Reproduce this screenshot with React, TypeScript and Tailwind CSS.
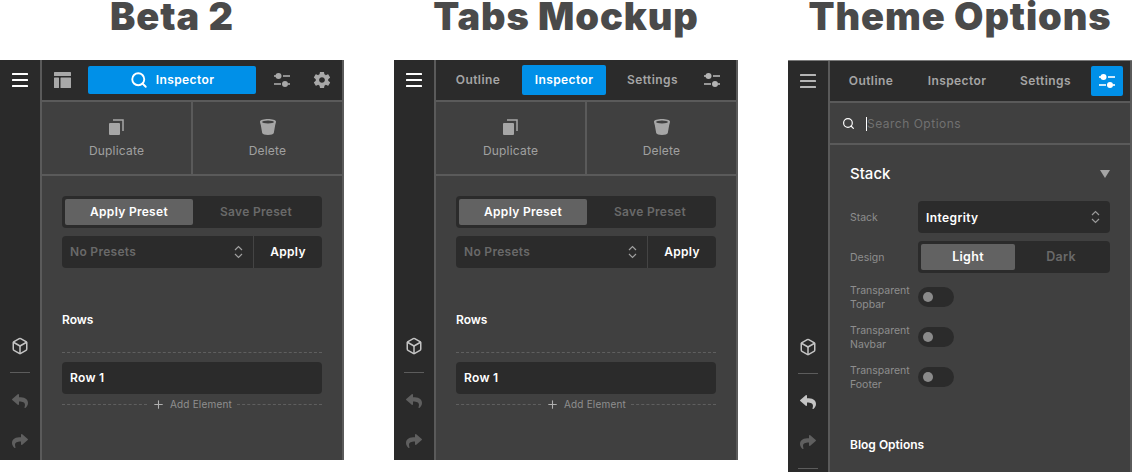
import React from 'react';
import { Box, Plus, Search } from 'lucide-react';
import { FaReply, FaShare } from 'react-icons/fa';
import { IoMdSettings } from 'react-icons/io';

const Hamburger = ({ dim }: { dim?: boolean }) => (
  <svg width="16" height="14" viewBox="0 0 16 14" className={dim ? 'text-[#b5b5b5]' : 'text-white'}>
    <rect y="0" width="16" height="2" rx="0.5" fill="currentColor" />
    <rect y="6" width="16" height="2" rx="0.5" fill="currentColor" />
    <rect y="12" width="16" height="2" rx="0.5" fill="currentColor" />
  </svg>
);

const Sliders = ({ className }: { className: string }) => (
  <svg width="16" height="14" viewBox="0 0 16 14" className={className}>
    <rect x="0" y="2.200" width="2" height="1.600" fill="currentColor" />
    <circle cx="4.500" cy="3" r="3" fill="currentColor" />
    <rect x="9" y="2.200" width="7" height="1.600" fill="currentColor" />
    <rect x="0" y="10.200" width="7" height="1.600" fill="currentColor" />
    <circle cx="11" cy="11" r="3" fill="currentColor" />
    <rect x="14" y="10.200" width="2" height="1.600" fill="currentColor" />
  </svg>
);

const LayoutIcon = () => (
  <svg width="17" height="16" viewBox="0 0 17 16" className="text-[#a8a8a8]">
    <rect x="0" y="0" width="17" height="4" rx="0.5" fill="currentColor" />
    <rect x="0" y="5.500" width="5" height="10.500" rx="0.5" fill="currentColor" />
    <rect x="6.500" y="5.500" width="10.500" height="10.500" rx="0.5" fill="currentColor" />
  </svg>
);

const DuplicateIcon = () => (
  <svg width="15" height="16" viewBox="0 0 15 16" className="text-[#a6a6a6]">
    <rect x="0" y="4" width="11" height="12" rx="1" fill="currentColor" />
    <path d="M4 1h10v11" fill="none" stroke="currentColor" strokeWidth="1.500" />
  </svg>
);

const TrashIcon = () => (
  <svg width="16" height="16" viewBox="0 0 16 16" className="text-[#a6a6a6]">
    <path d="M0 2.500C0 1 4 0 8 0s8 1 8 2.500c0 1-.4 2-.8 3.500L13.800 14c-.2 1.300-2.800 2-5.800 2s-5.600-.7-5.800-2L.8 6C.4 4.500 0 3.500 0 2.500z" fill="currentColor" />
    <ellipse cx="8" cy="3" rx="6" ry="1.500" fill="#404040" />
  </svg>
);

const UpDown = ({ className }: { className: string }) => (
  <svg width="9" height="14" viewBox="0 0 9 14" fill="none" stroke="currentColor" strokeWidth="1.200" className={className}>
    <path d="M1 5l3.500-3.500L8 5" />
    <path d="M1 9l3.500 3.500L8 9" />
  </svg>
);

const Divider = () => <div className="w-5 h-px bg-[#5c5c5c]" />;

const Rail = ({ dimMenu, undoOn, extra }: { dimMenu?: boolean; undoOn?: boolean; extra?: boolean }) => (
  <div className="w-10 shrink-0 bg-[#2a2a2a] flex flex-col items-center">
    <div className="h-10 shrink-0 flex items-center justify-center">
      <Hamburger dim={dimMenu} />
    </div>
    <div className="mt-[237px] flex flex-col items-center">
      <Box size={18} strokeWidth={2} className="text-[#c4c4c4]" />
      <div className="mt-[17px]"><Divider /></div>
      <FaReply size={16} className={`mt-[20px] ${undoOn ? 'text-[#c4c4c4]' : 'text-[#5f5f5f]'}`} />
      <FaShare size={16} className="mt-6 text-[#5f5f5f]" />
      {extra && <div className="mt-[18px]"><Divider /></div>}
    </div>
  </div>
);

const Tab = ({ label, className }: { label: string; className: string }) => (
  <div className={`h-[30px] flex items-center justify-center text-xs tracking-[0.4px] font-semibold text-[#a5a5a5] ${className}`}>
    {label}
  </div>
);

const ActiveTab = ({ label, className }: { label: string; className: string }) => (
  <div className={`w-[84px] h-[30px] flex items-center justify-center rounded-[2px] bg-[#0090e8] text-white text-xs tracking-[0.4px] font-semibold ${className}`}>
    {label}
  </div>
);

const Toggle = ({ left, right, activeWidth, className }: { left: string; right: string; activeWidth: string; className: string }) => (
  <div className={`h-8 p-[3px] flex rounded-[4px] bg-[#2b2b2b] font-semibold tracking-[0.3px] ${className}`}>
    <div className={`${activeWidth} flex items-center justify-center rounded-[2px] bg-[#626262] text-white`}>{left}</div>
    <div className="flex-1 flex items-center justify-center text-[#696969]">{right}</div>
  </div>
);

const Actions = () => (
  <div className="h-[74px] shrink-0 flex border-b-2 border-[#5a5a5a]">
    <div className="flex-1 flex flex-col items-center pt-[17px] border-r-2 border-[#5a5a5a]">
      <DuplicateIcon />
      <span className="mt-[8px] text-xs tracking-[0.2px] text-[#a0a0a0]">Duplicate</span>
    </div>
    <div className="flex-1 flex flex-col items-center pt-[17px]">
      <TrashIcon />
      <span className="mt-[8px] text-xs tracking-[0.2px] text-[#a0a0a0]">Delete</span>
    </div>
  </div>
);

const DashedLine = () => <div className="flex-1 border-t border-dashed border-[#5f5f5f]" />;

const PresetBody = () => (
  <div className="px-5 pt-5">
    <Toggle left="Apply Preset" right="Save Preset" activeWidth="w-32" className="text-xs" />
    <div className="mt-2 h-8 flex rounded-[4px] bg-[#2b2b2b] text-xs font-semibold tracking-[0.3px]">
      <div className="flex-1 flex items-center justify-between pl-2 pr-[10px] text-[#696969] border-r border-[#444444]">
        <span>No Presets</span>
        <UpDown className="text-[#a0a0a0]" />
      </div>
      <div className="w-[68px] flex items-center justify-center text-white">Apply</div>
    </div>
    <div className="mt-[44px] text-xs font-semibold text-white">Rows</div>
    <div className="mt-[24px] border-t border-dashed border-[#5f5f5f]" />
    <div className="mt-[9px] h-8 flex items-center px-2 rounded-[4px] bg-[#2b2b2b] text-xs font-semibold tracking-[0.3px] text-white">Row 1</div>
    <div className="h-5 flex items-center gap-[5px]">
      <DashedLine />
      <Plus size={13} className="text-[#b0b0b0]" />
      <span className="text-[10px] tracking-[0.2px] text-[#8f8f8f]">Add Element</span>
      <DashedLine />
    </div>
  </div>
);

const Title = ({ children }: { children: React.ReactNode }) => (
  <h1 className="h-[60px] text-center whitespace-nowrap text-[38px] leading-[32px] font-black tracking-[0.9px] text-[#4a4a4a]">{children}</h1>
);

const OptionRow = ({ label, children }: { label: React.ReactNode; children: React.ReactNode }) => (
  <div className="flex items-center">
    <div className="w-[68px] translate-y-px text-[10.500px] leading-[14px] text-[#8e8e8e]">{label}</div>
    {children}
  </div>
);

const Switch = () => (
  <div className="w-9 h-5 rounded-full bg-[#2b2b2b] flex items-center pl-[5px]">
    <div className="w-2.5 h-2.5 rounded-full bg-[#8a8a8a]" />
  </div>
);

const BetaPanel = () => (
  <div className="h-[400px] flex bg-[#2a2a2a]">
    <Rail />
    <div className="flex-1 min-w-0 flex flex-col bg-[#404040] border-x-2 border-[#5a5a5a]">
      <div className="h-[42px] shrink-0 bg-[#2b2b2b] border-b-2 border-[#5a5a5a] flex items-center pl-3">
        <LayoutIcon />
        <div className="ml-[17px] w-[168px] h-7 flex items-center justify-center gap-2 rounded-[2px] bg-[#0090e8] text-white text-xs font-semibold tracking-[0.4px]">
          <Search size={18} strokeWidth={2.500} />
          Inspector
        </div>
        <Sliders className="ml-[18px] text-[#a8a8a8]" />
        <IoMdSettings size={20} className="ml-[22px] text-[#a8a8a8]" />
      </div>
      <Actions />
      <PresetBody />
    </div>
  </div>
);

const TabsPanel = () => (
  <div className="h-[400px] flex bg-[#2a2a2a]">
    <Rail />
    <div className="flex-1 min-w-0 flex flex-col bg-[#404040] border-x-2 border-[#5a5a5a]">
      <div className="h-[42px] shrink-0 bg-[#2b2b2b] border-b-2 border-[#5a5a5a] flex items-center pl-5">
        <Tab label="Outline" className="w-[44px]" />
        <ActiveTab label="Inspector" className="ml-[22px]" />
        <Tab label="Settings" className="ml-[21px] w-[51px]" />
        <Sliders className="ml-[26px] text-[#b4b4b4]" />
      </div>
      <Actions />
      <PresetBody />
    </div>
  </div>
);

const ThemePanel = () => (
  <div className="h-[412px] overflow-hidden flex bg-[#2a2a2a] border-t border-[#7a7a7a]">
    <Rail dimMenu undoOn extra />
    <div className="flex-1 min-w-0 flex flex-col bg-[#404040] border-x-2 border-[#5a5a5a]">
      <div className="h-[42px] shrink-0 bg-[#2b2b2b] border-b-2 border-[#5a5a5a] flex items-center pl-[19px]">
        <Tab label="Outline" className="w-[44px]" />
        <Tab label="Inspector" className="ml-[35px] w-[58px]" />
        <Tab label="Settings" className="ml-[34px] w-[51px]" />
        <div className="ml-[20px] w-8 h-[30px] rounded-[2px] bg-[#0090e8] flex items-center justify-center">
          <Sliders className="text-white" />
        </div>
      </div>
      <div className="h-[42px] shrink-0 pt-px border-b-2 border-[#5a5a5a] flex items-center pl-3">
        <Search size={13} strokeWidth={2.200} className="text-white" />
        <div className="ml-[11px] w-px h-[14px] bg-white" />
        <span className="text-xs tracking-[0.5px] text-[#717171]">Search Options</span>
      </div>
      <div className="px-5">
        <div className="mt-[18px] h-[22px] flex items-center justify-between">
          <span className="text-[15px] leading-[22px] font-medium text-white">Stack</span>
          <div className="w-0 h-0 border-x-[5px] border-x-transparent border-t-[8px] border-t-[#a5a5a5]" />
        </div>
        <div className="mt-4 flex flex-col">
          <OptionRow label="Stack">
            <div className="flex-1 h-8 flex items-center justify-between pl-2 pr-[10px] rounded-[4px] bg-[#2b2b2b] text-xs font-semibold tracking-[0.4px] text-white">
              <span className="translate-y-px">Integrity</span>
              <UpDown className="text-[#9a9a9a]" />
            </div>
          </OptionRow>
          <div className="mt-2">
            <OptionRow label="Design">
              <Toggle left="Light" right="Dark" activeWidth="w-[94px]" className="flex-1 text-[12.500px]" />
            </OptionRow>
          </div>
          <div className="mt-[10px] flex flex-col gap-[12px]">
            <OptionRow label={<>Transparent<br />Topbar</>}><Switch /></OptionRow>
            <OptionRow label={<>Transparent<br />Navbar</>}><Switch /></OptionRow>
            <OptionRow label={<>Transparent<br />Footer</>}><Switch /></OptionRow>
          </div>
        </div>
        <div className="mt-[46px] text-xs font-semibold text-white">Blog Options</div>
      </div>
    </div>
  </div>
);

export default function App() {
  return (
    <div className="w-[1132px] h-[472px] overflow-hidden bg-white flex justify-between font-['Inter',sans-serif]">
      <div className="w-[344px]">
        <Title>Beta 2</Title>
        <BetaPanel />
      </div>
      <div className="w-[344px]">
        <Title>Tabs Mockup</Title>
        <TabsPanel />
      </div>
      <div className="w-[344px]">
        <Title>Theme Options</Title>
        <ThemePanel />
      </div>
    </div>
  );
}
